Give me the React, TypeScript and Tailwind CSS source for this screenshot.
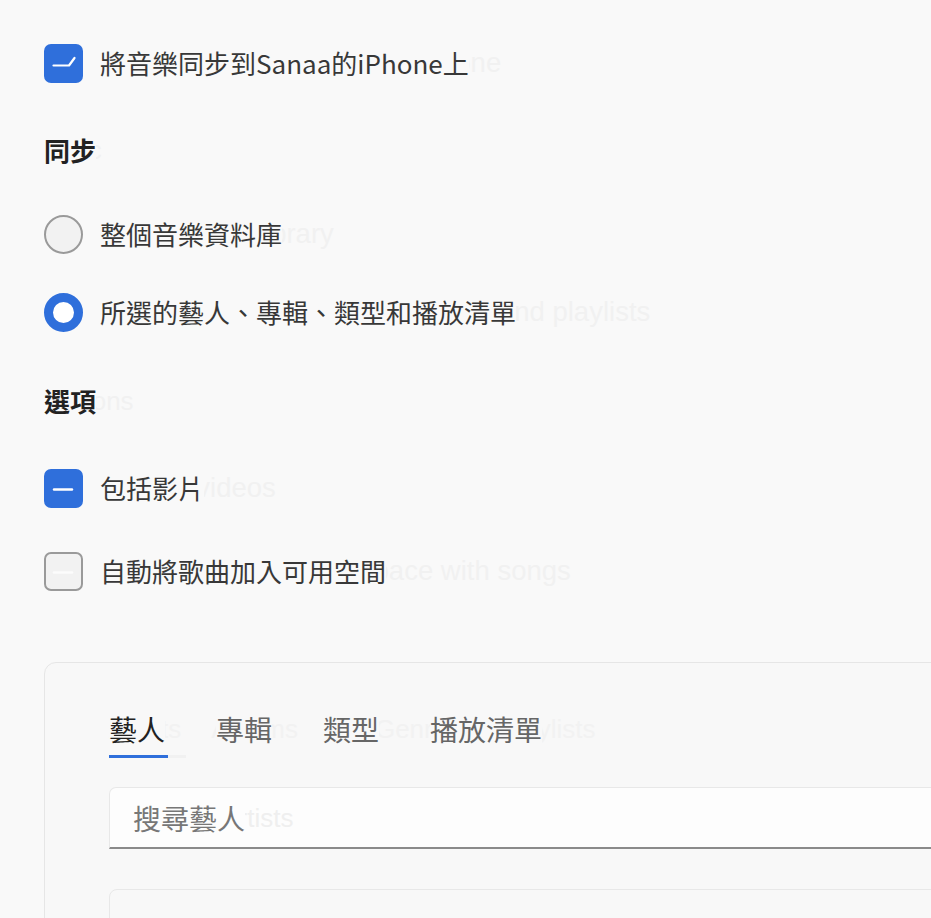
import type { ReactNode } from "react";

const zh = "font-['Noto_Sans_CJK_TC','Noto_Sans_CJK_SC',sans-serif]";
const en = "font-['Liberation_Sans',Arial,sans-serif]";

// Chinese label drawn over the faint English original
function Label({
  text,
  ghost,
  className = "",
  ghostClass = "text-[27.5px] font-normal",
  cover = "bg-[#f9f9f9]",
  ghostColor = "text-[#f1f1f1]",
}: {
  text: string;
  ghost: string;
  className?: string;
  ghostClass?: string;
  cover?: string;
  ghostColor?: string;
}) {
  return (
    <span className="grid items-center">
      <span className={`col-start-1 row-start-1 whitespace-nowrap leading-[36px] ${en} ${ghostColor} ${ghostClass}`}>
        {ghost}
      </span>
      <span className={`col-start-1 row-start-1 justify-self-start whitespace-nowrap ${zh} ${cover} ${className}`}>
        {text}
      </span>
    </span>
  );
}

function Check({ mark }: { mark: "tick" | "minus" | "off" }) {
  const on = mark !== "off";
  return (
    <span
      className={`flex h-[39px] w-[39px] shrink-0 items-center justify-center rounded-[7px] ${
        on ? "bg-[#2f6fdb]" : "border-2 border-[#9a9a9a] bg-[#f2f2f2]"
      }`}
    >
      <svg width="39" height="39" viewBox="0 0 39 39" fill="none" className={on ? "" : "-m-[2px]"}>
        {mark === "tick" && (
          <path d="M9.5 21.5H25L30.5 14" stroke="white" strokeWidth="2.2" strokeLinecap="round" strokeLinejoin="round" />
        )}
        {mark === "minus" && <path d="M10 20.5H28" stroke="white" strokeWidth="2.4" strokeLinecap="round" />}
        {mark === "off" && <path d="M10 20.5H28" stroke="#fcfcfc" strokeWidth="2.4" strokeLinecap="round" />}
      </svg>
    </span>
  );
}

function Radio({ on }: { on: boolean }) {
  return on ? (
    <span className="h-[39px] w-[39px] shrink-0 rounded-full border-[9px] border-[#2f6fdb] bg-white" />
  ) : (
    <span className="h-[39px] w-[39px] shrink-0 rounded-full border-2 border-[#9a9a9a] bg-[#f2f2f2]" />
  );
}

function Row({ control, children, className = "" }: { control: ReactNode; children: ReactNode; className?: string }) {
  return (
    <div className={`flex h-[40px] items-center gap-[17px] ${className}`}>
      {control}
      {children}
    </div>
  );
}

const body = "text-[26px] leading-[36px] text-[#383838]";
const head = "text-[26px] leading-[36px] font-bold text-[#222]";

export default function App() {
  return (
    <div className="h-[918px] w-[931px] overflow-hidden bg-[#f9f9f9] pl-[44px] pt-[43px]">
      <Row control={<Check mark="tick" />}>
        <Label text="將音樂同步到Sanaa的iPhone上" ghost="Sync Music onto Sanaa's iPhone" className={body} />
      </Row>

      <div className="mt-[47px] flex h-[40px] items-center">
        <Label text="同步" ghost="Sync" className={head} ghostClass="text-[26px]" />
      </div>

      <Row className="mt-[44px]" control={<Radio on={false} />}>
        <Label text="整個音樂資料庫" ghost="Entire music library" className={body} />
      </Row>
      <Row className="mt-[38px]" control={<Radio on />}>
        <Label
          text="所選的藝人、專輯、類型和播放清單"
          ghost="Selected artists, albums, genres and playlists"
          className={body}
        />
      </Row>

      <div className="mt-[49px] flex h-[40px] items-center">
        <Label text="選項" ghost="Options" className={head} ghostClass="text-[26px]" />
      </div>

      <Row className="mt-[47px]" control={<Check mark="minus" />}>
        <Label text="包括影片" ghost="Include videos" className={body} />
      </Row>
      <Row className="mt-[43px]" control={<Check mark="off" />}>
        <Label
          text="自動將歌曲加入可用空間"
          ghost="Automatically fill free space with songs"
          className={body}
        />
      </Row>

      {/* selection panel, runs off the right edge */}
      <div className="mt-[71px] w-[920px] rounded-tl-[12px] border border-[#e6e6e6] bg-[#f8f8f8] pl-[64px] pt-[48px]">
        <div className="grid">
          <div className={`col-start-1 row-start-1 flex h-[36px] items-center text-[26px] text-[#f2f2f2] ${en}`}>
            <span>Artists</span>
            <span className="ml-[30px]">Albums</span>
            <span className="ml-[77px]">Genres</span>
            <span className="ml-[40px]">Playlists</span>
          </div>
          <div className={`col-start-1 row-start-1 flex h-[36px] items-center gap-[51px] text-[28px] leading-[36px] ${zh}`}>
            <span className="bg-[#f8f8f8] text-[#222]">藝人</span>
            <span className="bg-[#f8f8f8] text-[#666]">專輯</span>
            <span className="bg-[#f8f8f8] text-[#666]">類型</span>
            <span className="bg-[#f8f8f8] text-[#666]">播放清單</span>
          </div>
        </div>
        <div className="mt-[8px] grid h-[3px] w-[77px]">
          <span className="col-start-1 row-start-1 h-[3px] w-[77px] bg-[#f1f1f1]" />
          <span className="col-start-1 row-start-1 h-[3px] w-[59px] bg-[#2f6fdb]" />
        </div>

        <div className="mt-[29px] flex h-[62px] items-center rounded-t-[7px] border border-b-2 border-[#e8e8e8] border-b-[#8a8a8a] bg-[#fdfdfd] pl-[23px]">
          <Label
            text="搜尋藝人"
            ghost="Search Artists"
            className="text-[28px] leading-[36px] text-[#777]"
            ghostClass="text-[26px]"
            cover="bg-[#fdfdfd]"
            ghostColor="text-[#efefef]"
          />
        </div>

        <div className="mt-[40px] h-[120px] rounded-t-[8px] border border-[#e8e8e8] bg-[#f8f8f8]" />
      </div>
    </div>
  );
}
